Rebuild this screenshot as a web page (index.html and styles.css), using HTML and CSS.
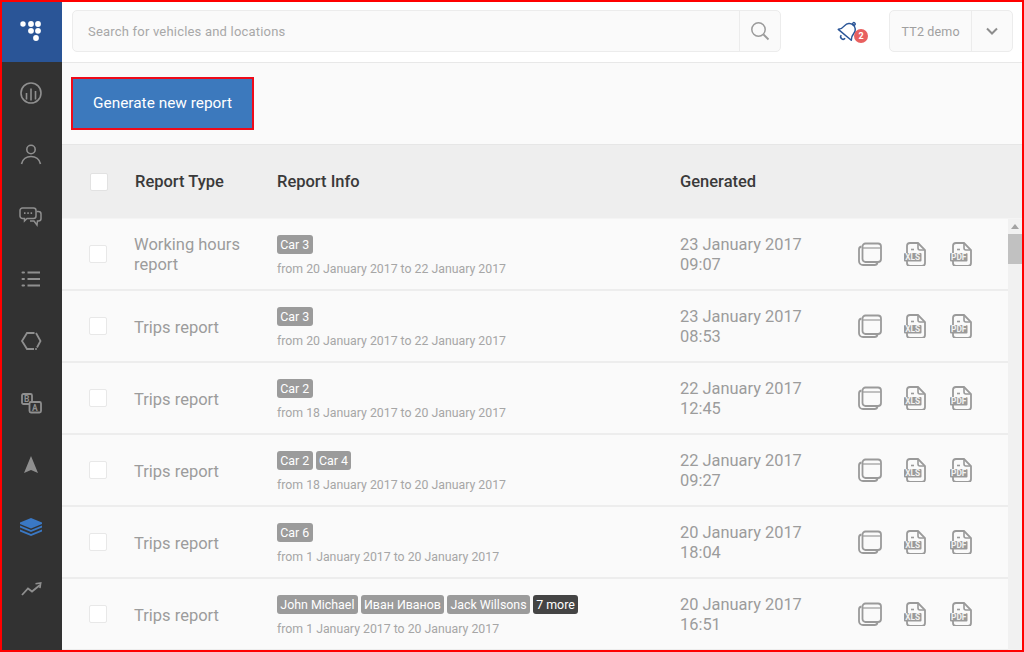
FILE: index.html
```html
<!DOCTYPE html>
<html lang="en">
<head>
<meta charset="utf-8">
<title>Reports</title>
<link rel="stylesheet" href="styles.css">
</head>
<body>
<svg class="defs" width="0" height="0" aria-hidden="true">
  <defs>
    <symbol id="i-win" viewBox="0 0 24 24"><rect x="4.500" y="1.500" width="18.500" height="18.500" rx="3" fill="none" stroke="currentColor" stroke-width="1.800"/><path d="M5 6h17.500" stroke="currentColor" stroke-width="1.200" fill="none"/><path d="M3.500 4.500A3 3 0 0 0 1 7.500V19a4 4 0 0 0 4 4h11.500a3 3 0 0 0 3-2.500" fill="none" stroke="currentColor" stroke-width="1.800"/></symbol>
    <symbol id="i-file" viewBox="0 0 24 24"><path d="M3 11V4a3 3 0 0 1 3-3h8l7 7v13a3 3 0 0 1-3 3H6a3 3 0 0 1-3-3v-2" fill="none" stroke="currentColor" stroke-width="1.800"/><path d="M14 1.500V6a2 2 0 0 0 2 2h4.500" fill="none" stroke="currentColor" stroke-width="1.600"/><path d="M7 7.500h3" stroke="currentColor" stroke-width="1.600"/><rect x="0" y="11" width="17.500" height="8.500" rx="1" fill="currentColor"/></symbol>
  </defs>
</svg>
<div class="frame">
  <nav class="side">
    <div class="logo">
      <svg width="22" height="21" viewBox="0 0 22 21" fill="#fff"><circle cx="3" cy="3" r="2.700"/><circle cx="11" cy="3" r="2.900"/><circle cx="18" cy="3" r="2.900"/><circle cx="11" cy="9.800" r="2.900"/><circle cx="18" cy="9.800" r="2.900"/><circle cx="16" cy="17" r="2.900"/></svg>
    </div>
    <a class="nav-item"><svg width="24" height="24" viewBox="0 0 24 24" fill="none" stroke="currentColor" stroke-width="1.600"><circle cx="12" cy="12" r="10"/><path d="M7.500 12v6.500M12 7.500v12M16.500 10v8.500"/></svg></a>
    <a class="nav-item"><svg width="24" height="24" viewBox="0 0 24 24" fill="none" stroke="currentColor" stroke-width="1.600"><circle cx="12" cy="6.500" r="4.200"/><path d="M2.500 21c1-4.800 5-7.500 9.500-7.500s8.500 2.700 9.500 7.500"/></svg></a>
    <a class="nav-item"><svg width="24" height="24" viewBox="0 0 24 24" fill="none" stroke="currentColor" stroke-width="1.500"><path d="M3.500 3h11a2.500 2.500 0 0 1 2.500 2.500v5.500a2.500 2.500 0 0 1-2.500 2.500H8l-2.500 2.500v-2.500h-2A2.500 2.500 0 0 1 1 11V5.500A2.500 2.500 0 0 1 3.500 3z"/><path d="M17.500 6.500h2A2.500 2.500 0 0 1 22 9v4.500a2.500 2.500 0 0 1-2.500 2.500h-1l-.5 4-3-4H11"/><path d="M5 8.200h1.500M8.300 8.200h1.500M11.600 8.200h1.500" stroke-width="1.800"/></svg></a>
    <a class="nav-item"><svg width="24" height="24" viewBox="0 0 24 24" fill="none" stroke="currentColor" stroke-width="2"><path d="M8.500 5.500H21M8.500 12H21M8.500 18.500H21"/><path d="M3.500 5.500h1.500M3.500 12h1.500M3.500 18.500h1.500" stroke-linecap="round"/></svg></a>
    <a class="nav-item"><svg width="24" height="24" viewBox="0 0 24 24" fill="none" stroke="currentColor" stroke-width="1.800"><path d="M15.500 4H8L3 12l5 8h7"/><path d="M17 4l4.500 8-3.500 6.500"/><circle cx="17" cy="20" r="1" fill="currentColor" stroke="none"/></svg></a>
    <a class="nav-item"><svg width="24" height="24" viewBox="0 0 24 24" fill="none" stroke="currentColor" stroke-width="1.800"><rect x="3" y="3" width="10" height="10" rx="1.500"/><rect x="10.500" y="11" width="11.500" height="10.500" rx="1.500" fill="#323232"/><text class="ba" x="5" y="11">B</text><text class="ba" x="13" y="19.500">A</text></svg></a>
    <a class="nav-item"><svg width="24" height="24" viewBox="0 0 24 24" fill="currentColor"><path d="M12 3l7 17-7-3-7 3z"/></svg></a>
    <a class="nav-item active"><svg width="24" height="24" viewBox="0 0 24 24" fill="currentColor"><path d="M12 3l11 4.500V9l-11 4.500L1 9V7.500z"/><path d="M1 10.500l11 4.500 11-4.500v2L12 17 1 12.500z"/><path d="M1 14.500L12 19l11-4.500v2L12 21 1 16.500z"/></svg></a>
    <a class="nav-item"><svg width="24" height="24" viewBox="0 0 24 24" fill="none" stroke="currentColor" stroke-width="1.800"><path d="M3 18l6-6.500 4 3 8-6.500"/><path d="M16.500 6.800l5.200-.8-.8 5.200" stroke-width="1.600"/></svg></a>
  </nav>
  <main class="main">
    <header class="top">
      <div class="search">
        <span class="search-text">Search for vehicles and locations</span>
        <span class="search-btn"><svg width="20" height="20" viewBox="0 0 20 20" fill="none" stroke="#9b9b9b" stroke-width="1.500"><circle cx="8.500" cy="8.500" r="6.700"/><path d="M13.500 13.500l5 5" stroke-width="1.800"/></svg></span>
      </div>
      <div class="bell">
        <svg width="22" height="22" viewBox="0 0 22 22" fill="none" stroke="#2a5597" stroke-width="1.500"><g transform="rotate(40 11 11)"><path d="M2.500 16c2-2 2.500-4.500 2.500-7a6 6 0 0 1 12 0c0 2.500.5 5 2.500 7z" stroke-linejoin="round"/><path d="M8.500 18.500a2.500 2.500 0 0 0 5 0"/><circle cx="11" cy="1.800" r="1.300"/></g></svg>
        <span class="badge">2</span>
      </div>
      <div class="user">
        <span class="user-name">TT2 demo</span>
        <span class="user-arrow"><svg width="12" height="8" viewBox="0 0 12 8" fill="none" stroke="#8d8d8d" stroke-width="2"><path d="M1 1.500l5 5 5-5"/></svg></span>
      </div>
    </header>
    <section class="toolbar"><button class="generate">Generate new report</button></section>
    <div class="thead">
      <span class="c-check"><span class="box head-box"></span></span>
      <span class="c-type">Report Type</span>
      <span class="c-info">Report Info</span>
      <span class="c-date">Generated</span>
    </div>
    <div class="tbody">
      <div class="rows">
        <div class="row">
          <span class="c-check"><span class="box"></span></span>
          <span class="c-type name">Working hours report</span>
          <div class="c-info"><div class="tags"><span class="tag">Car 3</span></div><div class="range">from 20 January 2017 to 22 January 2017</div></div>
          <span class="c-date when">23 January 2017<br>09:07</span>
          <div class="acts"><svg class="a"><use href="#i-win"/></svg><span class="f"><svg class="a"><use href="#i-file"/></svg><b>XLS</b></span><span class="f"><svg class="a"><use href="#i-file"/></svg><b>PDF</b></span></div>
        </div>
        <div class="row">
          <span class="c-check"><span class="box"></span></span>
          <span class="c-type name one">Trips report</span>
          <div class="c-info"><div class="tags"><span class="tag">Car 3</span></div><div class="range">from 20 January 2017 to 22 January 2017</div></div>
          <span class="c-date when">23 January 2017<br>08:53</span>
          <div class="acts"><svg class="a"><use href="#i-win"/></svg><span class="f"><svg class="a"><use href="#i-file"/></svg><b>XLS</b></span><span class="f"><svg class="a"><use href="#i-file"/></svg><b>PDF</b></span></div>
        </div>
        <div class="row">
          <span class="c-check"><span class="box"></span></span>
          <span class="c-type name one">Trips report</span>
          <div class="c-info"><div class="tags"><span class="tag">Car 2</span></div><div class="range">from 18 January 2017 to 20 January 2017</div></div>
          <span class="c-date when">22 January 2017<br>12:45</span>
          <div class="acts"><svg class="a"><use href="#i-win"/></svg><span class="f"><svg class="a"><use href="#i-file"/></svg><b>XLS</b></span><span class="f"><svg class="a"><use href="#i-file"/></svg><b>PDF</b></span></div>
        </div>
        <div class="row">
          <span class="c-check"><span class="box"></span></span>
          <span class="c-type name one">Trips report</span>
          <div class="c-info"><div class="tags"><span class="tag">Car 2</span><span class="tag">Car 4</span></div><div class="range">from 18 January 2017 to 20 January 2017</div></div>
          <span class="c-date when">22 January 2017<br>09:27</span>
          <div class="acts"><svg class="a"><use href="#i-win"/></svg><span class="f"><svg class="a"><use href="#i-file"/></svg><b>XLS</b></span><span class="f"><svg class="a"><use href="#i-file"/></svg><b>PDF</b></span></div>
        </div>
        <div class="row">
          <span class="c-check"><span class="box"></span></span>
          <span class="c-type name one">Trips report</span>
          <div class="c-info"><div class="tags"><span class="tag">Car 6</span></div><div class="range">from 1 January 2017 to 20 January 2017</div></div>
          <span class="c-date when">20 January 2017<br>18:04</span>
          <div class="acts"><svg class="a"><use href="#i-win"/></svg><span class="f"><svg class="a"><use href="#i-file"/></svg><b>XLS</b></span><span class="f"><svg class="a"><use href="#i-file"/></svg><b>PDF</b></span></div>
        </div>
        <div class="row">
          <span class="c-check"><span class="box"></span></span>
          <span class="c-type name one">Trips report</span>
          <div class="c-info"><div class="tags"><span class="tag">John Michael</span><span class="tag">Иван Иванов</span><span class="tag">Jack Willsons</span><span class="tag dark">7 more</span></div><div class="range">from 1 January 2017 to 20 January 2017</div></div>
          <span class="c-date when">20 January 2017<br>16:51</span>
          <div class="acts"><svg class="a"><use href="#i-win"/></svg><span class="f"><svg class="a"><use href="#i-file"/></svg><b>XLS</b></span><span class="f"><svg class="a"><use href="#i-file"/></svg><b>PDF</b></span></div>
        </div>
      </div>
      <div class="scroll"><span class="scroll-up"></span><span class="scroll-thumb"></span></div>
    </div>
  </main>
</div>
</body>
</html>
```
FILE: styles.css
```css
* { box-sizing: border-box; }
html, body { margin: 0; height: 100%; }
body { font-family: Roboto, "Noto Sans", sans-serif; background: #fff; overflow: hidden; }
.defs { position: absolute; }
.frame { display: flex; width: 1024px; height: 652px; border: 2px solid #f00; overflow: hidden; }
.side { width: 60px; flex: none; background: #323232; display: flex; flex-direction: column; }
.logo { height: 60px; flex: none; background: #2a5597; display: flex; align-items: center; justify-content: center; padding-right: 2px; }
.logo svg { margin-bottom: 1px; }
.nav-item { height: 62px; display: flex; align-items: center; justify-content: center; color: #8f8f8f; flex: none; padding-right: 2px; }
.nav-item.active { color: #3a78c4; }
.ba { font: 700 8.500px Roboto, sans-serif; fill: currentColor; stroke: none; }
.main { flex: 1; min-width: 0; display: flex; flex-direction: column; background: #fafafa; }
.top { height: 61px; flex: none; background: #fff; border-bottom: 1px solid #e8e8e8; display: flex; align-items: flex-start; padding: 8px 9px 0 10px; }
.search { width: 710px; height: 42px; display: flex; align-items: center; background: #fafafa; border: 1px solid #ececec; border-radius: 5px; }
.search-text { flex: 1; padding-left: 15px; font-size: 13px; color: #a8a8a8; letter-spacing: .2px; }
.search-btn { width: 41px; height: 40px; border-left: 1px solid #ececec; display: flex; align-items: center; justify-content: center; }
.bell { position: relative; margin: 10px 0 0 56px; width: 32px; height: 24px; }
.badge { position: absolute; left: 17px; top: 9px; width: 14px; height: 14px; border-radius: 50%; background: #e8605f; color: #fff; font-size: 9px; font-weight: 700; line-height: 14px; text-align: center; }
.user { margin-left: 20px; width: 124px; height: 42px; display: flex; align-items: center; background: #fafafa; border: 1px solid #ececec; border-radius: 5px; }
.user-name { width: 81px; text-align: center; font-size: 12.500px; color: #a0a0a0; letter-spacing: .15px; }
.user-arrow { flex: 1; height: 40px; border-left: 1px solid #ececec; display: flex; align-items: center; justify-content: center; }
.toolbar { height: 81px; flex: none; padding: 14px 0 0 9px; background: #fafafa; }
.generate { width: 183px; height: 53px; background: #3c79bd; border: 2px solid #ee0a1a; color: #fff; font: 400 15.400px Roboto, sans-serif; padding: 0 0 2px; }
.thead { height: 75px; flex: none; display: flex; align-items: center; background: #eeeeee; border-top: 1px solid #e6e6e6; border-bottom: 1px solid #f4f4f4; font-size: 16.500px; font-weight: 500; color: #3a3a3a; }
.c-check { width: 73px; flex: none; padding-left: 27px; display: flex; }
.thead .c-check { padding-left: 28px; }
.c-type { width: 142px; flex: none; }
.c-info { width: 403px; flex: none; }
.c-date { width: 178px; flex: none; }
.box { width: 18px; height: 18px; background: #fff; border: 1px solid #e8e8e8; border-radius: 2px; }
.thead .head-box { border-color: #e2e2e2; }
.tbody { flex: 1; min-height: 0; display: flex; overflow: hidden; }
.rows { flex: 1; min-width: 0; }
.row { height: 72px; display: flex; align-items: center; border-bottom: 2px solid #ededed; padding-top: 2px; }
.row .c-check { margin-bottom: 2px; }
.name { font-size: 16.500px; line-height: 20px; color: #9c9c9c; padding-right: 30px; margin-left: -1px; margin-right: 1px; }
.name.one { margin-top: 2px; }
.row .c-info { padding-top: 2px; }
.tags { display: flex; gap: 3px; }
.tag { height: 19px; line-height: 19px; padding: 0 3.300px; background: #9b9b9b; color: #fff; font-size: 12.400px; border-radius: 3px; }
.tag.dark { background: #444; }
.range { margin-top: 8px; font-size: 12.300px; line-height: 15px; color: #a6a6a6; }
.when { font-size: 16.400px; line-height: 20px; color: #9c9c9c; }
.acts { display: flex; align-items: center; gap: 22px; margin-bottom: 2px; }
.a { width: 24px; height: 24px; color: #9a9a9a; display: block; }
.f { position: relative; width: 24px; height: 24px; display: block; }
.f b { position: absolute; left: 0; top: 11px; width: 17.500px; height: 8.500px; font-size: 8.300px; font-weight: 700; line-height: 9px; color: #f2f2f2; text-align: center; }
.scroll { width: 14px; flex: none; background: #f1f1f1; }
.scroll-up { display: block; width: 0; margin: 5px auto 0; border: 4px solid transparent; border-top: 0; border-bottom: 5px solid #a3a3a3; }
.scroll-thumb { display: block; height: 30px; margin-top: 5px; background: #c1c1c1; }
```
